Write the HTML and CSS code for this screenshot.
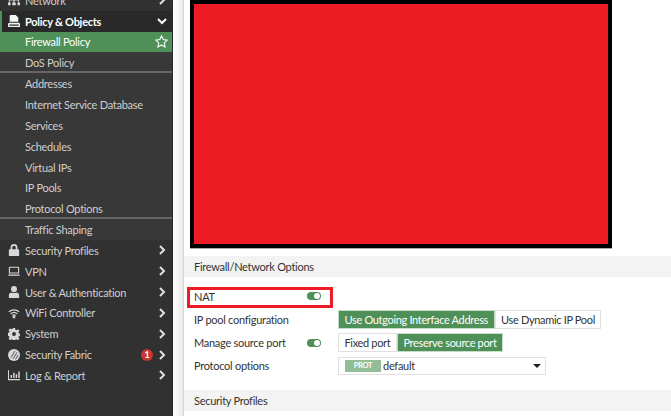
FILE: index.html
```html
<!DOCTYPE html>
<html lang="en">
<head>
<meta charset="utf-8">
<title>Firewall Policy</title>
<link rel="stylesheet" href="styles.css">
</head>
<body>
<div class="app">
  <nav class="sidebar">
    <ul class="menu">
      <li class="top clipped"><svg class="ico" viewBox="0 0 14 14"><path d="M5 0h4v4H8v2h5v4h1v3h-3v-3h1V7.500H7.700V10H9v3H5v-3h1.300V7.500H2V10h1v3H0v-3h1V6h5V4H5z"/></svg><span class="lbl">Network</span><svg class="chev" viewBox="0 0 8 10"><path d="M2 1l4 4-4 4"/></svg></li>
      <li class="top open"><svg class="ico" viewBox="0 0 14 14"><path d="M3 0h6l3 3v5H2V1a1 1 0 0 1 1-1z"/><path d="M1 9h12l1 1.500V13a1 1 0 0 1-1 1H1a1 1 0 0 1-1-1v-2.500zM1.500 11v1.500h11V11z"/></svg><span class="lbl strong">Policy &amp; Objects</span><svg class="chev" viewBox="0 0 10 8"><path d="M1 2l4 4 4-4"/></svg></li>
      <li class="sub active"><span class="lbl">Firewall Policy</span><svg class="star" viewBox="0 0 12 12"><path d="M6 .8l1.600 3.400 3.700.5-2.700 2.600.7 3.700L6 9.200 2.700 11l.7-3.700L.7 4.700l3.700-.5z"/></svg></li>
      <li class="sub sep"><span class="lbl">DoS Policy</span></li>
      <li class="sub"><span class="lbl">Addresses</span></li>
      <li class="sub"><span class="lbl">Internet Service Database</span></li>
      <li class="sub"><span class="lbl">Services</span></li>
      <li class="sub"><span class="lbl">Schedules</span></li>
      <li class="sub"><span class="lbl">Virtual IPs</span></li>
      <li class="sub"><span class="lbl">IP Pools</span></li>
      <li class="sub sep"><span class="lbl">Protocol Options</span></li>
      <li class="sub"><span class="lbl">Traffic Shaping</span></li>
      <li class="top"><svg class="ico" viewBox="0 0 14 14"><path d="M2 6h1V4a4 4 0 0 1 8 0v2h1a1 1 0 0 1 1 1v6a1 1 0 0 1-1 1H2a1 1 0 0 1-1-1V7a1 1 0 0 1 1-1zm3 0h4V4a2 2 0 0 0-4 0z"/></svg><span class="lbl">Security Profiles</span><svg class="chev" viewBox="0 0 8 10"><path d="M2 1l4 4-4 4"/></svg></li>
      <li class="top"><svg class="ico" viewBox="0 0 14 14"><path d="M2 2h10a1 1 0 0 1 1 1v7H1V3a1 1 0 0 1 1-1zm.300 1.300v5.400h9.400V3.300zM0 11h14v.800l-1 .700H1l-1-.700z"/></svg><span class="lbl">VPN</span><svg class="chev" viewBox="0 0 8 10"><path d="M2 1l4 4-4 4"/></svg></li>
      <li class="top"><svg class="ico" viewBox="0 0 14 14"><path d="M7 0a3.400 3.400 0 0 1 3.400 3.600A3.400 3.400 0 0 1 7 7.200a3.400 3.400 0 0 1-3.400-3.600A3.400 3.400 0 0 1 7 0zM3.500 7.500C5 8.500 9 8.500 10.500 7.500 12.300 8 13 9.500 13 11v2a1 1 0 0 1-1 1H2a1 1 0 0 1-1-1v-2c0-1.500.7-3 2.500-3.500z"/></svg><span class="lbl">User &amp; Authentication</span><svg class="chev" viewBox="0 0 8 10"><path d="M2 1l4 4-4 4"/></svg></li>
      <li class="top"><svg class="ico wifi" viewBox="0 0 14 14"><path d="M1 5.500c3.500-3 8.500-3 12 0M3 7.800c2.500-2 5.500-2 8 0M5 10c1.200-.9 2.800-.9 4 0"/><circle cx="7" cy="11.800" r="1"/></svg><span class="lbl">WiFi Controller</span><svg class="chev" viewBox="0 0 8 10"><path d="M2 1l4 4-4 4"/></svg></li>
      <li class="top"><svg class="ico" viewBox="0 0 14 14"><path fill-rule="evenodd" d="M5.800 0h2.400l.4 2 1.300.6 1.800-1 1.600 1.700-1.100 1.700.6 1.300 2 .4v2.400l-2 .4-.6 1.300 1.100 1.700-1.600 1.700-1.800-1.100-1.300.6-.4 2H5.800l-.4-2-1.300-.6-1.800 1.100-1.600-1.700 1.100-1.700-.6-1.300-2-.4V5.700l2-.4.6-1.300-1.100-1.700 1.600-1.700 1.800 1 1.300-.6zM7 4.700a2.300 2.300 0 1 0 0 4.600 2.300 2.300 0 0 0 0-4.600z"/></svg><span class="lbl">System</span><svg class="chev" viewBox="0 0 8 10"><path d="M2 1l4 4-4 4"/></svg></li>
      <li class="top"><svg class="ico" viewBox="0 0 14 14"><circle cx="7" cy="7" r="7"/><path class="slash" d="M3.500 10L8 2.500M6 11.500L10.500 4M8.800 12l3-5"/></svg><span class="lbl">Security Fabric</span><span class="badge">1</span><svg class="chev" viewBox="0 0 8 10"><path d="M2 1l4 4-4 4"/></svg></li>
      <li class="top"><svg class="ico" viewBox="0 0 14 14"><path d="M0 1.500h1.200V11.800H14V13H0zM3 7h1.700v3.500H3zM6 4.500h1.700v6H6zM9 6h1.700v4.500H9zM12 3h1.700v7.500H12z"/></svg><span class="lbl">Log &amp; Report</span><svg class="chev" viewBox="0 0 8 10"><path d="M2 1l4 4-4 4"/></svg></li>
    </ul>
  </nav>
  <main class="content">
    <div class="shot-wrap"><div class="shot"></div></div>
    <section class="section">
      <h2 class="section-title">Firewall/Network Options</h2>
      <div class="form">
        <div class="row nat">
          <span class="highlight"></span>
          <span class="label">NAT</span><span class="toggle"></span>
        </div>
        <div class="row">
          <span class="label">IP pool configuration</span>
          <div class="btns"><span class="btn on">Use Outgoing Interface Address</span><span class="btn">Use Dynamic IP Pool</span></div>
        </div>
        <div class="row">
          <span class="label">Manage source port</span><span class="toggle"></span>
          <div class="btns"><span class="btn">Fixed port</span><span class="btn on">Preserve source port</span></div>
        </div>
        <div class="row">
          <span class="label">Protocol options</span>
          <div class="select"><span class="tag">PROT</span><span class="val">default</span><span class="caret"></span></div>
        </div>
      </div>
    </section>
    <section class="section">
      <h2 class="section-title">Security Profiles</h2>
    </section>
  </main>
</div>
</body>
</html>
```

FILE: styles.css
```css
* { box-sizing: border-box; }
html, body { margin: 0; height: 100%; overflow: hidden; background: #fff; }
body { font-family: Lato, "Open Sans", sans-serif; font-size: 11px; letter-spacing: -.27px; color: #333; }
.app { display: flex; height: 416px; overflow: hidden; }

.sidebar { width: 173px; flex: none; background: #313131; border-right: 1px solid #2a2a2a; overflow: hidden; }
.menu { list-style: none; margin: -10.150px 0 0; padding: 0; }
.menu li { height: 20.850px; display: flex; align-items: center; color: #cfcfcf; line-height: 1; }
.lbl { flex: 1; white-space: nowrap; }
.top { padding: 0 6px 0 8px; }
.top .lbl { margin-left: 5px; }
.ico { width: 12px; height: 12px; fill: #d8d8d8; flex: none; }
.wifi { fill: #d8d8d8; stroke: #d8d8d8; stroke-width: 1.400; }
.wifi path { fill: none; }
.slash { fill: none; stroke: #313131; stroke-width: .9; }
.chev { width: 8px; height: 10px; fill: none; stroke: #e0e0e0; stroke-width: 2; flex: none; }
.open { background: #292929; border-left: 2px solid #4f9058; padding-left: 6px; color: #fff; }
.open .ico { fill: #f4f4f4; }
.open .chev { stroke: #fff; width: 10px; height: 8px; margin-right: -1px; }
.strong { font-weight: 700; color: #fff; }
.sub { padding: 0 3px 0 25px; background: #383838; }
.menu .active { background: #4f9058; color: #fff; }
.star { width: 13px; height: 13px; fill: none; stroke: #fff; stroke-width: 1; margin-right: 1px; }
.sep { border-bottom: 2px solid #666; padding-top: 2px; }
.badge { width: 12px; height: 12px; border-radius: 50%; background: #c8372d; color: #fff; font-size: 9px; font-weight: 700; display: flex; align-items: center; justify-content: center; margin-right: 5px; }

.content { flex: 1; min-width: 0; padding-left: 11px; background: linear-gradient(90deg, #fff 0, #ececec 9px, #d8d8d8 10.500px, #fff 11px); background-repeat: no-repeat; }
.shot-wrap { padding: 0 0 0 6px; height: 256px; background: #fff; }
.shot { width: 422px; height: 248px; background: #ed1c24; border: 4px solid #000; box-shadow: 0 1px 0 #aaa; }
.section { background: #fff; }
.section-title { margin: 0; height: 21px; padding-left: 10px; background: #f3f3f3; font: 400 11px/21px Lato, sans-serif; letter-spacing: -.27px; color: #333; }
.form { padding-top: 9px; height: 113px; }
.row { position: relative; display: flex; align-items: center; height: 19px; margin-bottom: 4px; padding-left: 10px; }
.label { width: 113px; flex: none; white-space: nowrap; }
.toggle { position: relative; width: 14px; height: 8px; border-radius: 4px; background: #4f9058; flex: none; }
.toggle::after { content: ""; position: absolute; right: 1px; top: 1px; width: 6px; height: 6px; border-radius: 50%; background: #fff; }
.row .label + .btns, .row .label + .select { margin-left: 31px; }
.row .toggle + .btns { margin-left: 17px; }
.btns { display: flex; letter-spacing: -.33px; }
.btn { height: 19px; padding: 0 5.500px; border: 1px solid #e0e0e0; line-height: 17px; white-space: nowrap; background: #fff; }
.btn.on { background: #4f9058; border-color: #c6dcc9; color: #fff; }
.nat { height: 20px; margin-bottom: 4px; }
.highlight { position: absolute; left: 3px; top: 1px; width: 146px; height: 21px; border: 3px solid #ed1c24; }
.select { width: 208px; height: 18px; border: 1px solid #e0e0e0; display: flex; align-items: center; padding-left: 6px; background: #fff; }
.tag { width: 36px; height: 12px; background: #93bd97; color: #fff; font-size: 7.500px; font-weight: 700; text-align: center; line-height: 12px; }
.val { margin-left: 2px; flex: 1; }
.caret { width: 0; height: 0; border: 4px solid transparent; border-top: 4px solid #222; border-bottom: 0; margin-right: 4px; }
```
